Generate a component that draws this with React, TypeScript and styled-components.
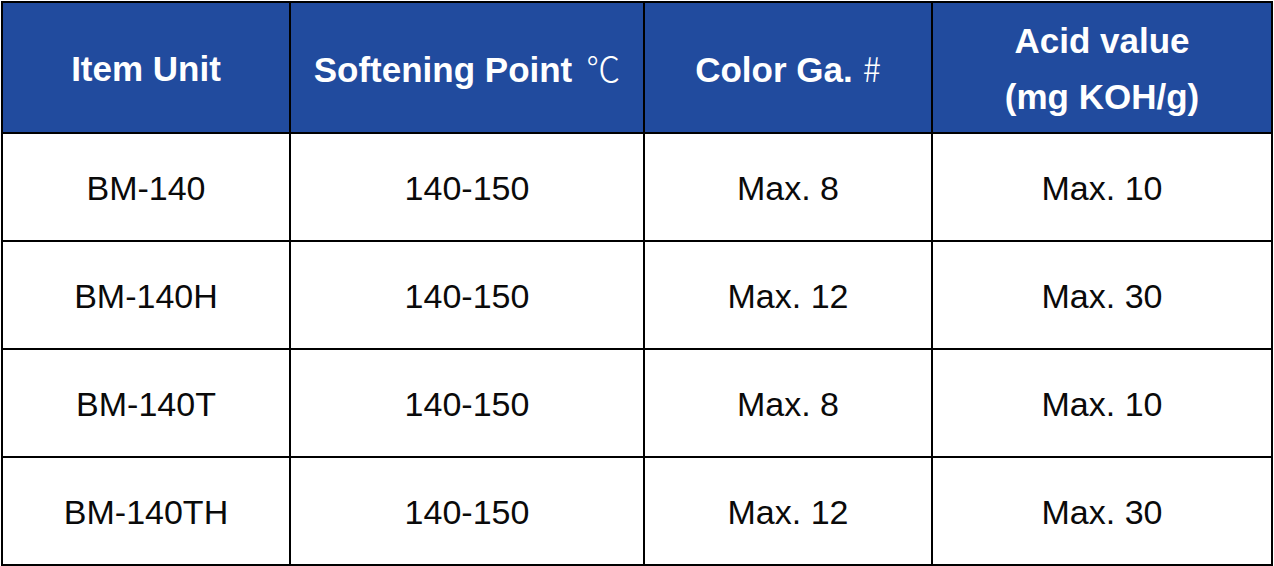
import React from "react";
import styled, { createGlobalStyle } from "styled-components";

const GlobalStyle = createGlobalStyle`
  html, body {
    margin: 0;
    padding: 0;
    background: #ffffff;
  }
  body {
    font-family: "Liberation Sans", Arial, sans-serif;
  }
`;

const Page = styled.div`
  padding: 1px 0 0 1px;
  width: 1272px;
`;

const Table = styled.div`
  display: grid;
  grid-template-columns: 286px 352px 286px 1fr;
  grid-template-rows: 129px repeat(4, 106px);
  gap: 2px;
  padding: 2px;
  background: #000000;
`;

const HeaderCell = styled.div`
  background: #214b9e;
  color: #ffffff;
  font-family: "Liberation Sans", Arial, sans-serif;
  font-weight: 700;
  font-size: 35px;
  line-height: 56px;
  display: flex;
  flex-direction: column;
  align-items: center;
  justify-content: center;
  text-align: center;
  padding-top: 3px;
`;

const Symbol = styled.span<{ $gap: number }>`
  font-family: "Noto Sans CJK SC", "DejaVu Sans", sans-serif;
  font-weight: 300;
  font-size: 34px;
  margin-left: ${(p) => p.$gap}px;
`;

const Cell = styled.div`
  background: #ffffff;
  color: #0a0a0a;
  font-family: "Liberation Sans", Arial, sans-serif;
  font-size: 34px;
  display: flex;
  align-items: center;
  justify-content: center;
  padding-top: 3px;
`;

const rows = [
  ["BM-140", "140-150", "Max. 8", "Max. 10"],
  ["BM-140H", "140-150", "Max. 12", "Max. 30"],
  ["BM-140T", "140-150", "Max. 8", "Max. 10"],
  ["BM-140TH", "140-150", "Max. 12", "Max. 30"],
];

export default function App() {
  return (
    <>
      <GlobalStyle />
      <Page>
        <Table>
          <HeaderCell>Item Unit</HeaderCell>
          <HeaderCell>
            <span>
              Softening Point<Symbol $gap={14}>℃</Symbol>
            </span>
          </HeaderCell>
          <HeaderCell>
            <span>
              Color Ga.<Symbol $gap={10}>#</Symbol>
            </span>
          </HeaderCell>
          <HeaderCell>
            <span>Acid value</span>
            <span>(mg KOH/g)</span>
          </HeaderCell>
          {rows.map((r, i) =>
            r.map((v, j) => <Cell key={`${i}-${j}`}>{v}</Cell>)
          )}
        </Table>
      </Page>
    </>
  );
}
